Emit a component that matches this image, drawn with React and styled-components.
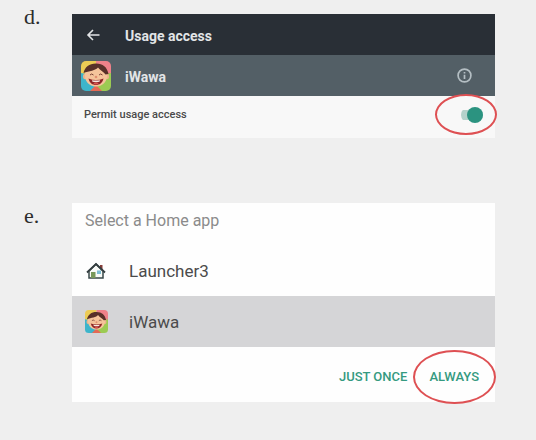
import React, { useState } from "react";
import styled, { createGlobalStyle } from "styled-components";

const GlobalStyle = createGlobalStyle`
  * { box-sizing: border-box; }
  body {
    margin: 0;
    background: #efefef;
    font-family: Roboto, "Liberation Sans", sans-serif;
  }
`;

const Steps = styled.main`
  display: grid;
  gap: 65px;
  padding: 14px 41px 38px 24px;
`;

const Step = styled.section`
  display: grid;
  grid-template-columns: 48px minmax(0, 1fr);
  align-items: start;
`;

const Marker = styled.span`
  margin-top: ${({ $raised }) => ($raised ? "-10px" : "0")};
  font: 22px/26px "Liberation Serif", serif;
  color: #2c2c2c;
  -webkit-text-stroke: 0 currentColor;
`;

const Panel = styled.div`
  background: ${({ $tone }) => $tone};
`;

const Bar = styled.header`
  display: grid;
  grid-template-columns: 41px minmax(0, 1fr) auto;
  align-items: center;
  height: 41px;
  padding: 0 22px 0 12px;
  background: ${({ $tone }) => $tone};
  color: #e2e5e7;
`;

const BarTitle = styled.h2`
  margin: 0;
  padding-top: 2px;
  font-size: 14px;
  line-height: 20px;
  font-weight: 700;
`;

const AppBadge = styled.span`
  display: flex;
  margin-left: -3px;
`;

const IconButton = styled.button`
  display: flex;
  width: ${({ $size }) => $size}px;
  padding: 0;
  border: 0;
  background: none;
  color: inherit;
`;

const SettingRow = styled.label`
  display: flex;
  align-items: center;
  justify-content: space-between;
  height: 42px;
  padding: 0 12px 4px;
  font-size: 11px;
  line-height: 16px;
  font-weight: 500;
  color: #4a4a4a;
`;

const Circled = styled.span`
  position: relative;
  display: inline-flex;

  &::after {
    content: "";
    position: absolute;
    inset: ${({ $reach }) => $reach};
    border: 2px solid #de5053;
    border-radius: 50%;
    pointer-events: none;
  }
`;

const Switch = styled.input`
  appearance: none;
  display: flex;
  align-items: center;
  justify-content: flex-end;
  width: 22px;
  height: 16px;
  margin: 0;
  border-radius: 8px;
  background: linear-gradient(#b4d2cb, #b4d2cb) center / 100% 10px no-repeat;

  &::before {
    content: "";
    width: 16px;
    height: 16px;
    border-radius: 50%;
    background: #2b9380;
  }

  &:not(:checked) { justify-content: flex-start; }
  &:not(:checked)::before { background: #b5b5b5; }
`;

const DialogTitle = styled.h2`
  margin: 0;
  padding: 8px 13px 14px;
  font-size: 16px;
  line-height: 20px;
  font-weight: 400;
  color: #8b8b8b;
`;

const Choice = styled.button`
  display: grid;
  grid-template-columns: 44px minmax(0, 1fr);
  align-items: center;
  width: 100%;
  height: 51px;
  padding: 0 13px;
  border: 0;
  background: ${({ $selected }) => ($selected ? "#d5d5d7" : "transparent")};
  color: #4b4b4b;
  font: 17px/22px Roboto, "Liberation Sans", sans-serif;
  text-align: left;

  svg { display: block; }
`;

const Actions = styled.footer`
  display: flex;
  align-items: center;
  justify-content: flex-end;
  gap: 22px;
  height: 55px;
  padding: 4px 16px 0;
`;

const Action = styled.button`
  padding: 0;
  border: 0;
  background: none;
  color: #359a80;
  font: 500 13px/16px Roboto, "Liberation Sans", sans-serif;
`;

function BackArrow() {
  return (
    <svg width="18" height="18" viewBox="0 0 18 18" fill="none" stroke="currentColor" strokeWidth="1.6">
      <path d="M15.5 9H4.5M9 4 4 9l5 5" />
    </svg>
  );
}

function InfoIcon() {
  return (
    <svg width="16" height="16" viewBox="0 0 16 16" fill="none" stroke="#b4bec3" strokeWidth="1.7">
      <circle cx="7.5" cy="7.5" r="6.4" />
      <path d="M7.5 6.8v4.2M7.5 4v1.6" />
    </svg>
  );
}

function FaceIcon({ size, id }) {
  return (
    <svg width={size} height={size} viewBox="0 0 30 30">
      <clipPath id={id}><rect width="30" height="30" rx="5" /></clipPath>
      <g clipPath={`url(#${id})`}>
        <path fill="#eccb55" d="M0 0h15v15H0z" />
        <path fill="#ee8189" d="M15 0h15v15H15z" />
        <path fill="#3db5cb" d="M0 12l15 3v15H0z" />
        <path fill="#9ccb53" d="M15 15l15-3v18H15z" />
        <path fill="#e56a55" d="M9 30l6-6 6 6z" />
        <ellipse cx="4" cy="15.5" rx="2" ry="2.8" fill="#edb58d" />
        <ellipse cx="26" cy="15.5" rx="2" ry="2.8" fill="#edb58d" />
        <path fill="#f5c49b" d="M4 12C6 6 10 4 15 4s9 2 11 8c1 8-4 13.500-11 13.500S3 20 4 12z" />
        <path fill="#583029" d="M2.500 12C4 6 8 2.500 15 2.500S26 6 27.500 13l-3 .5C23 11 18.500 9 17 6.500 15 9.500 8 10 2.500 12z" />
        <path d="M9 14q1.500-2 3.500 0M18 14q1.500-2 3.500 0" fill="none" stroke="#794236" strokeWidth="1" />
        <circle cx="15" cy="16" r="1.300" fill="#e08e70" />
        <path fill="#8d2527" d="M7.500 17.500q7.500 3 15 0c-1 4.500-4 6.500-7.500 6.500s-6.500-2-7.500-6.500z" />
        <path fill="#f8e8df" d="M11 19.200q4 .8 8 0l-.5 1.600q-3.500.7-7 0z" />
        <ellipse cx="15" cy="22.500" rx="2.500" ry="1" fill="#d9544f" />
      </g>
    </svg>
  );
}

function HouseIcon() {
  return (
    <svg width="22" height="20" viewBox="0 0 22 20">
      <path fill="#863d38" d="M15 4h2.500v5H15z" />
      <path fill="#f8faf7" stroke="#39484a" strokeWidth="1.500" d="M4 10v7h14v-7l-7-7z" />
      <path fill="#78985a" d="M6 11h4.500v6H6z" />
      <path fill="#7dbdd3" d="M12 9.500h4v3.500h-4z" />
      <path fill="none" stroke="#343e40" strokeWidth="1.800" d="M2 11.500 11 3l9 8.500" />
    </svg>
  );
}

export default function App() {
  const [permitted, setPermitted] = useState(true);
  const [selected, setSelected] = useState("iWawa");

  return (
    <>
      <GlobalStyle />
      <Steps>
        <Step>
          <Marker $raised>d.</Marker>
          <Panel $tone="#f8f8f8">
            <Bar $tone="#292f36">
              <IconButton type="button" aria-label="Back" $size={18}><BackArrow /></IconButton>
              <BarTitle>Usage access</BarTitle>
            </Bar>
            <Bar $tone="#535f66">
              <AppBadge><FaceIcon size={30} id="face-large" /></AppBadge>
              <BarTitle>iWawa</BarTitle>
              <IconButton type="button" aria-label="App info" $size={16}><InfoIcon /></IconButton>
            </Bar>
            <SettingRow>
              Permit usage access
              <Circled $reach="-13px -14px -12px -26px">
                <Switch
                  type="checkbox"
                  role="switch"
                  checked={permitted}
                  onChange={(event) => setPermitted(event.target.checked)}
                />
              </Circled>
            </SettingRow>
          </Panel>
        </Step>
        <Step>
          <Marker>e.</Marker>
          <Panel $tone="#fefefe">
            <DialogTitle>Select a Home app</DialogTitle>
            <Choice type="button" $selected={selected === "Launcher3"} onClick={() => setSelected("Launcher3")}>
              <HouseIcon />
              Launcher3
            </Choice>
            <Choice type="button" $selected={selected === "iWawa"} onClick={() => setSelected("iWawa")}>
              <FaceIcon size={23} id="face-small" />
              iWawa
            </Choice>
            <Actions>
              <Action type="button">JUST ONCE</Action>
              <Circled $reach="-19px -17px -19px -16px">
                <Action type="button">ALWAYS</Action>
              </Circled>
            </Actions>
          </Panel>
        </Step>
      </Steps>
    </>
  );
}
